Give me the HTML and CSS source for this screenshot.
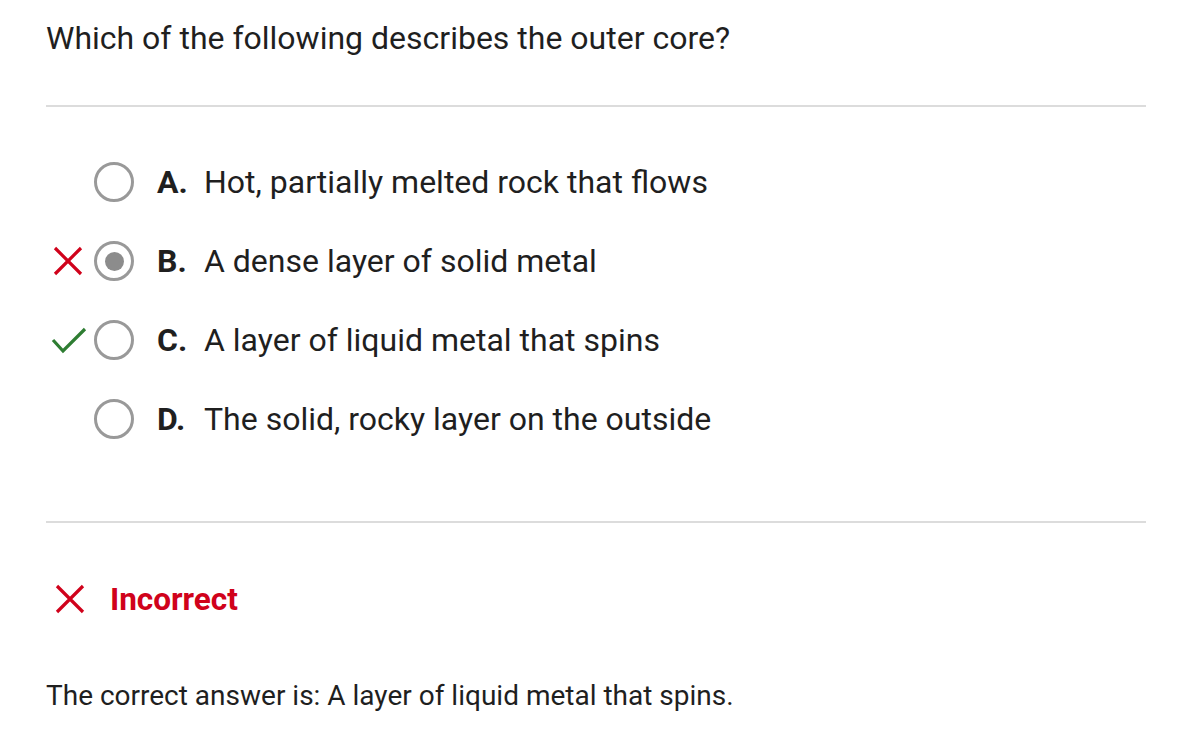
FILE: index.html
```html
<!DOCTYPE html>
<html>
<head>
<meta charset="utf-8">
<link rel="stylesheet" href="styles.css">
</head>
<body>
<div class="page">
  <div class="question">Which of the following describes the outer core?</div>
  <div class="rule rule-top"></div>
  <ul class="options">
    <li class="option">
      <span class="mark"></span>
      <span class="radio"></span>
      <span class="letter">A.</span>
      <span class="text">Hot, partially melted rock that flows</span>
    </li>
    <li class="option">
      <span class="mark mark-x">
        <svg width="32" height="32" viewBox="0 0 32 32"><path d="M3 3 L29 29 M29 3 L3 29" stroke="#d0021b" stroke-width="3.2" fill="none"/></svg>
      </span>
      <span class="radio selected"><span class="dot"></span></span>
      <span class="letter">B.</span>
      <span class="text">A dense layer of solid metal</span>
    </li>
    <li class="option">
      <span class="mark mark-check">
        <svg width="36" height="28" viewBox="0 0 36 28"><path d="M2 14 L12 25 L34 3" stroke="#2e7d32" stroke-width="3.2" fill="none"/></svg>
      </span>
      <span class="radio"></span>
      <span class="letter">C.</span>
      <span class="text">A layer of liquid metal that spins</span>
    </li>
    <li class="option">
      <span class="mark"></span>
      <span class="radio"></span>
      <span class="letter">D.</span>
      <span class="text">The solid, rocky layer on the outside</span>
    </li>
  </ul>
  <div class="rule rule-bottom"></div>
  <div class="feedback">
    <svg class="fb-icon" width="32" height="32" viewBox="0 0 32 32"><path d="M3 3 L29 29 M29 3 L3 29" stroke="#d0021b" stroke-width="3.2" fill="none"/></svg>
    <span class="fb-text">Incorrect</span>
  </div>
  <div class="answer">The correct answer is: A layer of liquid metal that spins.</div>
</div>
</body>
</html>
```
FILE: styles.css
```css
html, body {
  margin: 0;
  padding: 0;
  background: #ffffff;
}
body {
  font-family: Roboto, "Liberation Sans", sans-serif;
  color: #1f1f1f;
}
.page {
  padding: 18px 36px 0 46px;
}
.question {
  font-size: 32px;
  line-height: 40px;
}
.rule {
  height: 2px;
  background: #dcdcdc;
}
.rule-top {
  margin-top: 47px;
}
.options {
  list-style: none;
  margin: 0;
  padding: 55px 0 0 0;
}
.option {
  display: flex;
  align-items: center;
  height: 40px;
  margin-bottom: 39px;
}
.option:last-child {
  margin-bottom: 0;
}
.mark {
  width: 48px;
  display: flex;
  align-items: center;
}
.mark-x {
  padding-left: 6px;
  width: 42px;
}
.mark-check {
  padding-left: 5px;
  width: 43px;
}
.radio {
  width: 34px;
  height: 34px;
  border: 3px solid #999999;
  border-radius: 50%;
  display: flex;
  align-items: center;
  justify-content: center;
  box-sizing: content-box;
  margin-right: 23px;
}
.dot {
  width: 19px;
  height: 19px;
  border-radius: 50%;
  background: #8c8c8c;
}
.letter {
  font-weight: 700;
  font-size: 32px;
  width: 47px;
}
.text {
  font-size: 32px;
}
.rule-bottom {
  margin-top: 82px;
}
.feedback {
  display: flex;
  align-items: center;
  margin-top: 56px;
  height: 40px;
}
.fb-icon {
  margin-left: 8px;
  margin-right: 24px;
}
.fb-text {
  color: #d0021b;
  font-weight: 700;
  font-size: 31.5px;
}
.answer {
  margin-top: 60px;
  font-size: 28px;
}
```
